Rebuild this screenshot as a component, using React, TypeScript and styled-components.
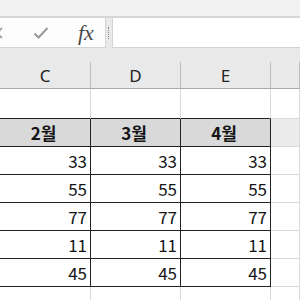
import { Fragment } from 'react';
import styled, { createGlobalStyle } from 'styled-components';

const GlobalStyle = createGlobalStyle`
    html, body {
        margin: 0;
        padding: 0;
        background: #ffffff;
        overflow: hidden;
    }
    body {
        font-family: "Noto Sans CJK KR", "Noto Sans", sans-serif;
    }
`;

const Sheet = styled.div`
    width: 300px;
    height: 300px;
    display: flex;
    flex-direction: column;
    overflow: hidden;
    background: #ffffff;
`;

const RibbonEdge = styled.div`
    height: 16px;
    background: #f1f1f1;
    border-bottom: 2px solid #d6d6d6;
    flex-shrink: 0;
`;

const FormulaBar = styled.div`
    height: 30px;
    display: flex;
    background: #e9e9e9;
    flex-shrink: 0;
`;

const IconBox = styled.div`
    width: 106px;
    display: flex;
    align-items: center;
    background: #fdfdfd;
    border-right: 1px solid #d4d4d4;
    border-bottom: 1px solid #d4d4d4;
    box-sizing: border-box;
`;

const Grip = styled.div`
    width: 6px;
    display: flex;
    align-items: center;
    justify-content: center;

    &::after {
        content: '';
        width: 1px;
        height: 12px;
        border-left: 1px dotted #8a8a8a;
    }
`;

const FormulaInput = styled.div`
    flex: 1;
    background: #ffffff;
    border-left: 1px solid #d4d4d4;
    border-bottom: 1px solid #d4d4d4;
`;

const Fx = styled.span`
    font-family: "Liberation Serif", serif;
    font-style: italic;
    font-size: 22px;
    color: #4a4a4a;
    margin-left: 29px;
    line-height: 1;
`;

const HeaderGap = styled.div`
    height: 14px;
    background: #e9e9e9;
    flex-shrink: 0;
`;

const Grid = styled.div`
    display: grid;
    grid-template-columns: 91px 90px 90px 1fr;
`;

const ColHead = styled.div`
    height: 27px;
    box-sizing: border-box;
    background: #e9e9e9;
    border-bottom: 1px solid #a9a9a9;
    border-right: 1px solid #bcbcbc;
    display: flex;
    align-items: center;
    justify-content: center;
    font-family: "Noto Sans", sans-serif;
    font-size: 17px;
    color: #222;
`;

const Cell = styled.div<{ $head?: boolean; $inTable?: boolean; $topEdge?: boolean; $outside?: boolean }>`
    height: 28px;
    box-sizing: border-box;
    display: flex;
    align-items: center;
    justify-content: ${p => (p.$head ? 'center' : 'flex-end')};
    padding-right: 3px;
    background: ${p => (p.$head ? '#d9d9d9' : p.$outside ? '#ececec' : '#ffffff')};
    border-right: 1px solid ${p => (p.$inTable ? '#222' : '#d9d9d9')};
    border-bottom: 1px solid ${p => (p.$inTable || p.$topEdge ? '#222' : '#d9d9d9')};
    font-family: "Noto Sans CJK KR", "Noto Sans", sans-serif;
    font-size: 17px;
    font-weight: ${p => (p.$head ? 700 : 400)};
    color: #151515;
`;

const TopRow = styled(Cell)`
    height: 30px;
`;

const months = ['2월', '3월', '4월'];
const rows = [33, 55, 77, 11, 45];

const App = () => {
    return (
        <Sheet>
            <GlobalStyle />
            <RibbonEdge />
            <FormulaBar>
                <IconBox>
                    <svg width="12" height="12" viewBox="0 0 12 12" style={{ marginLeft: -9 }}>
                        <path d="M1 1 L11 11 M11 1 L1 11" stroke="#9a9a9a" strokeWidth="1.6" fill="none" />
                    </svg>
                    <svg width="16" height="14" viewBox="0 0 16 14" style={{ marginLeft: 30 }}>
                        <path d="M1.5 7.5 L5.5 11.5 L14.5 2" stroke="#9a9a9a" strokeWidth="2" fill="none" />
                    </svg>
                    <Fx>fx</Fx>
                </IconBox>
                <Grip />
                <FormulaInput />
            </FormulaBar>
            <HeaderGap />
            <Grid>
                <ColHead>C</ColHead>
                <ColHead>D</ColHead>
                <ColHead>E</ColHead>
                <ColHead />

                {months.map(m => (
                    <TopRow key={`t-${m}`} $topEdge />
                ))}
                <TopRow />

                {months.map(m => (
                    <Cell key={m} $head $inTable>{m}</Cell>
                ))}
                <Cell $outside />

                {rows.map((v, i) => (
                    <Fragment key={i}>
                        <Cell $inTable>{v}</Cell>
                        <Cell $inTable>{v}</Cell>
                        <Cell $inTable>{v}</Cell>
                        <Cell />
                    </Fragment>
                ))}

                <Cell />
                <Cell />
                <Cell />
                <Cell />
            </Grid>
        </Sheet>
    );
};

export default App;
